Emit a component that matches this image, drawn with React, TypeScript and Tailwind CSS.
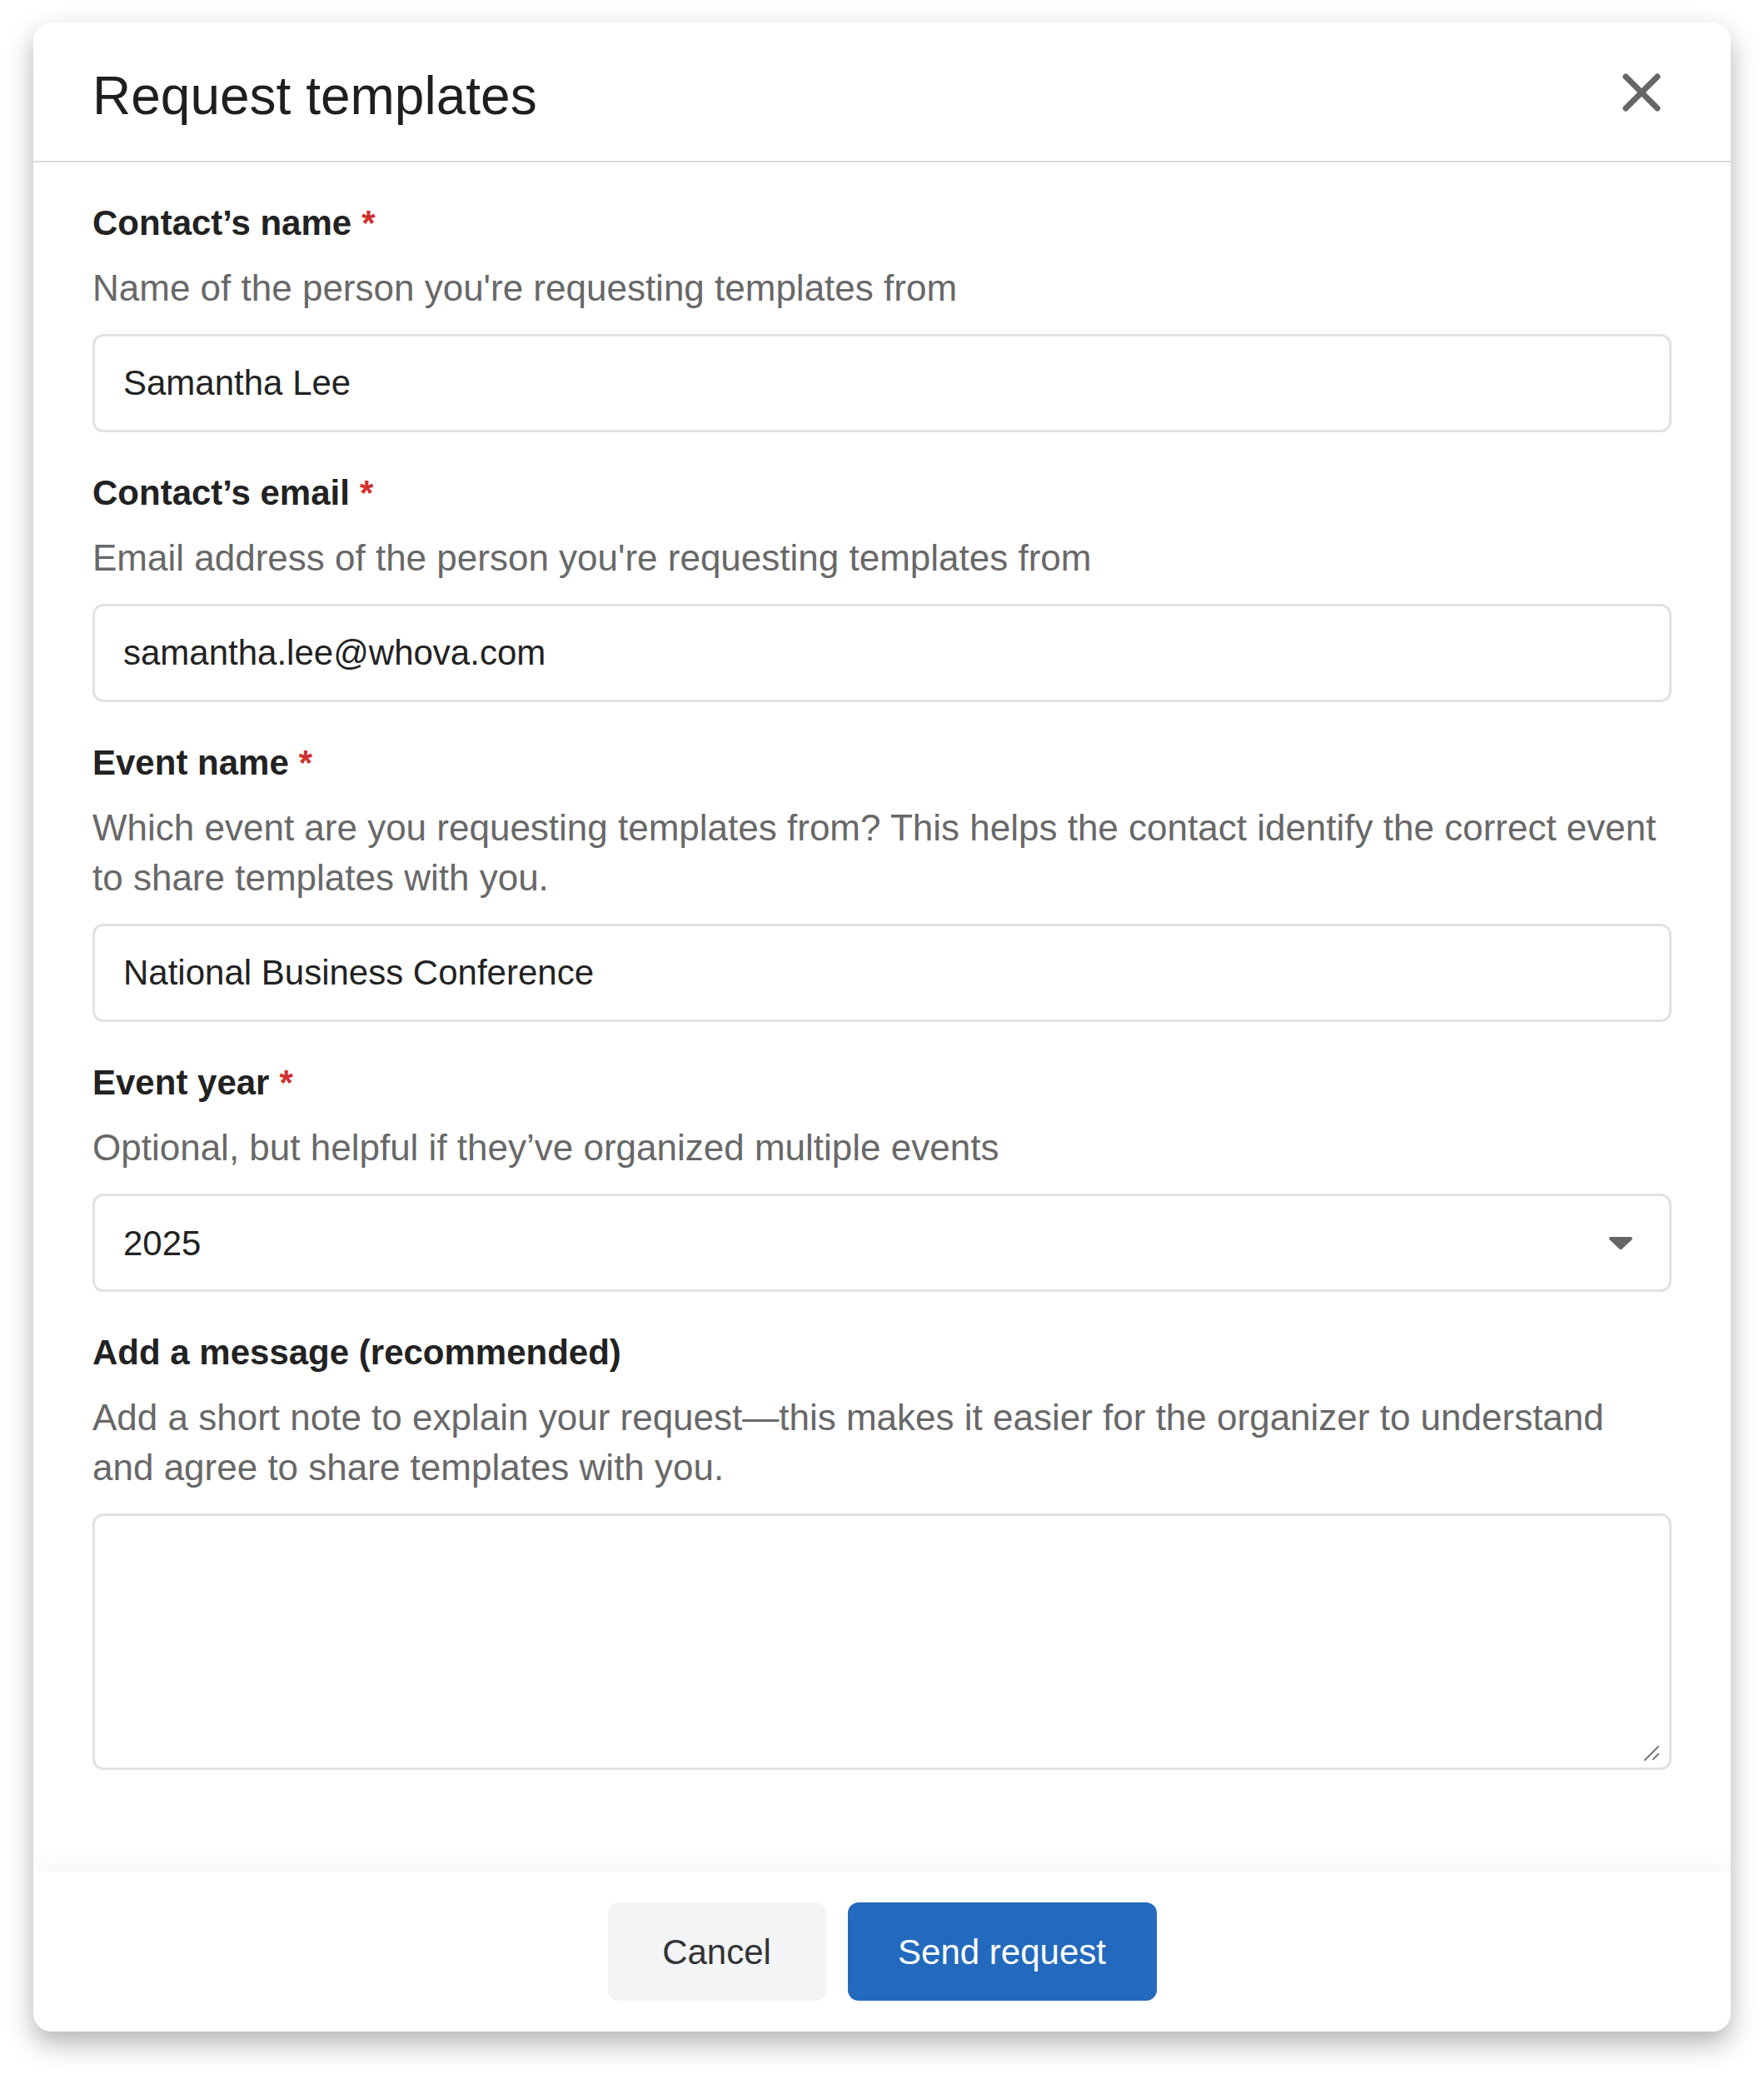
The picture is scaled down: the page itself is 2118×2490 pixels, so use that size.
import React from 'react';

const labelCls = 'text-[42px] leading-[50px] font-bold text-[#222]';
const descCls = 'mt-[23px] max-w-[1890px] text-[44px] leading-[60px] text-[#686868]';
const inputCls =
  'block h-[118px] w-full rounded-[13px] border-[3px] border-[#e2e2e2] bg-white px-[34px] text-[42px] text-[#222] outline-none';

type FieldProps = {
  label: string;
  required?: boolean;
  hint: React.ReactNode;
  children: React.ReactNode;
};

const Field: React.FC<FieldProps> = ({ label, required, hint, children }) => (
  <div>
    <div className={labelCls}>
      {label}
      {required && <span className="ml-[12px] text-[#d0302f]">*</span>}
    </div>
    <p className={descCls}>{hint}</p>
    <div className="relative mt-[25px]">{children}</div>
  </div>
);

export default function App() {
  return (
    <div className="min-h-screen bg-white pl-[40px] pt-[27px] font-['Liberation_Sans',Arial,sans-serif]">
      <div className="w-[2038px] overflow-hidden rounded-[22px] bg-white shadow-[0_14px_32px_rgba(0,0,0,0.3)]">
        {/* header */}
        <header className="flex items-center justify-between border-b-2 border-[#d6dbe3] pb-[40px] pl-[71px] pr-[84px] pt-[50px]">
          <h1 className="text-[64px] leading-[76px] text-[#1f1f1f]">Request templates</h1>
          <button className="-mt-[8px] text-[#666]" aria-label="Close">
            <svg width="46" height="46" viewBox="0 0 46 46" fill="none">
              <path d="M4 4L42 42M42 4L4 42" stroke="currentColor" strokeWidth="7" strokeLinecap="round" />
            </svg>
          </button>
        </header>

        {/* body */}
        <div className="flex flex-col gap-[48px] px-[71px] pb-[122px] pt-[48px]">
          <Field label="Contact’s name" required hint="Name of the person you're requesting templates from">
            <input className={inputCls} defaultValue="Samantha Lee" />
          </Field>

          <Field label="Contact’s email" required hint="Email address of the person you're requesting templates from">
            <input className={inputCls} defaultValue="samantha.lee@whova.com" />
          </Field>

          <Field
            label="Event name"
            required
            hint="Which event are you requesting templates from? This helps the contact identify the correct event to share templates with you."
          >
            <input className={inputCls} defaultValue="National Business Conference" />
          </Field>

          <Field label="Event year" required hint="Optional, but helpful if they’ve organized multiple events">
            <select className={`${inputCls} appearance-none`} defaultValue="2025">
              <option>2025</option>
              <option>2024</option>
              <option>2023</option>
            </select>
            <svg
              className="pointer-events-none absolute right-[46px] top-[51px] text-[#666]"
              width="30"
              height="17"
              viewBox="0 0 30 17"
            >
              <path d="M3 1h24a2 2 0 0 1 1.5 3.3L16.5 15.5a2 2 0 0 1-3 0L1.5 4.3A2 2 0 0 1 3 1z" fill="currentColor" />
            </svg>
          </Field>

          <Field
            label="Add a message (recommended)"
            hint="Add a short note to explain your request—this makes it easier for the organizer to understand and agree to share templates with you."
          >
            <textarea className="block h-[308px] w-full resize-none rounded-[13px] border-[3px] border-[#e2e2e2] bg-white px-[34px] py-[24px] text-[42px] text-[#222] outline-none" />
            {/* resize grip */}
            <svg
              className="pointer-events-none absolute bottom-[10px] right-[14px] text-[#7a7a7a]"
              width="20"
              height="20"
              viewBox="0 0 20 20"
            >
              <path d="M2 18L18 2M12 17L18 11" stroke="currentColor" strokeWidth="2.2" strokeLinecap="round" />
            </svg>
          </Field>
        </div>

        {/* footer */}
        <footer className="flex justify-center gap-[26px] bg-white py-[37px] shadow-[0_-10px_24px_rgba(0,0,0,0.035)]">
          <button className="h-[118px] w-[262px] rounded-[13px] bg-[#f3f4f6] text-[42px] text-[#333]">Cancel</button>
          <button className="h-[118px] w-[371px] rounded-[13px] bg-[#2369bd] text-[42px] text-white">Send request</button>
        </footer>
      </div>
    </div>
  );
}
